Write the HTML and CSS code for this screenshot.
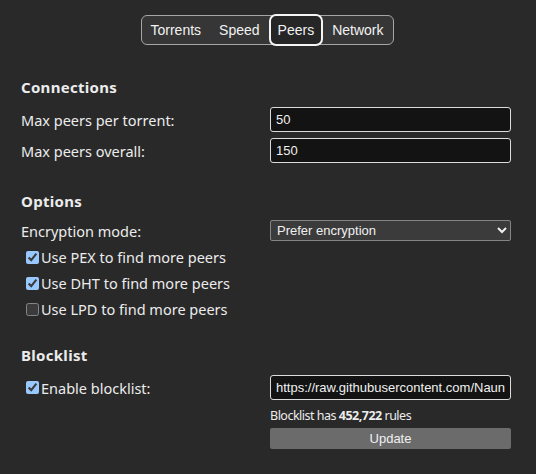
FILE: index.html
```html
<!DOCTYPE html>
<html>
<head>
<meta charset="utf-8">
<link rel="stylesheet" href="styles.css">
</head>
<body>
<div class="tabbar">
  <div class="tabs">
    <button class="tab">Torrents</button>
    <button class="tab">Speed</button>
    <button class="tab active">Peers</button>
    <button class="tab">Network</button>
  </div>
</div>
<div class="page">
  <section class="group">
    <h3 class="heading">Connections</h3>
    <div class="row">
      <label class="label">Max peers per torrent:</label>
      <input class="field" type="text" value="50">
    </div>
    <div class="row">
      <label class="label">Max peers overall:</label>
      <input class="field" type="text" value="150">
    </div>
  </section>
  <section class="group">
    <h3 class="heading">Options</h3>
    <div class="row row-select">
      <label class="label">Encryption mode:</label>
      <select class="select">
        <option>Prefer encryption</option>
      </select>
    </div>
    <label class="check"><input type="checkbox" checked><span>Use PEX to find more peers</span></label>
    <label class="check"><input type="checkbox" checked><span>Use DHT to find more peers</span></label>
    <label class="check"><input type="checkbox"><span>Use LPD to find more peers</span></label>
  </section>
  <section class="group">
    <h3 class="heading">Blocklist</h3>
    <div class="row">
      <label class="check inline"><input type="checkbox" checked><span>Enable blocklist:</span></label>
      <input class="field" type="text" value="https://raw.githubusercontent.com/Naunter/BT_BlockLists/master/bt_blocklists.gz">
    </div>
    <div class="row row-info">
      <span></span>
      <div class="info">Blocklist has <b>452,722</b> rules</div>
    </div>
    <div class="row row-btn">
      <span></span>
      <button class="update">Update</button>
    </div>
  </section>
</div>
</body>
</html>
```

FILE: styles.css
```css
html { color-scheme: dark; }
body {
  margin: 0;
  background: #292929;
  color: #ececec;
  font-family: "Noto Sans", "Open Sans", sans-serif;
  font-size: 14.5px;
}
.tabbar {
  display: flex;
  justify-content: center;
  padding-top: 15px;
}
.tabs {
  display: flex;
  background: #363636;
  border: 1px solid #a6a6a6;
  border-radius: 6px;
  height: 28px;
  margin-left: -2px;
}
.tab {
  font-family: "Liberation Sans", Arial, sans-serif;
  font-size: 14px;
  color: #f2f2f2;
  background: transparent;
  border: none;
  padding: 0 9px;
  height: 28px;
  cursor: pointer;
}
.tab.active {
  border: 2px solid #f4f4f4;
  border-radius: 7px;
  background: #262626;
  height: 32px;
  margin-top: -2px;
  padding: 0 7px;
}
.page {
  padding: 0 25px 0 21px;
}
.group { margin: 0; }
.heading {
  margin: 0;
  font-size: 15px;
  line-height: 20px;
  font-weight: 700;
  letter-spacing: 0.3px;
}
.group:nth-child(1) .heading { padding-top: 32px; padding-bottom: 10px; }
.group:nth-child(2) .heading { padding-top: 22px; padding-bottom: 9px; }
.group:nth-child(3) .heading { padding-top: 23px; padding-bottom: 10px; }
.row {
  display: grid;
  grid-template-columns: 249px 1fr;
  align-items: center;
  margin-bottom: 6px;
}
.label { white-space: nowrap; }
.field {
  box-sizing: border-box;
  height: 25px;
  width: 100%;
  background: #131313;
  color: #f0f0f0;
  border: 1px solid #dcdcdc;
  border-radius: 3px;
  padding: 0 5px;
  font-family: "Liberation Sans", Arial, sans-serif;
  font-size: 13px;
  outline: none;
}
.row-select { margin-bottom: 3px; }
.select {
  box-sizing: border-box;
  height: 21px;
  width: 100%;
  background: #3b3b3b;
  color: #f0f0f0;
  border: 1px solid #858585;
  border-radius: 2px;
  font-family: "Liberation Sans", Arial, sans-serif;
  font-size: 13px;
  padding: 0 2px;
}
.check {
  display: flex;
  align-items: center;
  height: 26px;
  padding-left: 4px;
  white-space: nowrap;
}
.check input {
  margin: 0 2px 0 1px;
  width: 13px;
  height: 13px;
}
.check.inline { height: 25px; }
.row-info { margin-bottom: 0; }
.info {
  font-size: 12.5px;
  letter-spacing: -0.5px;
  height: 20px;
  line-height: 20px;
}
.info b { font-weight: 700; }
.update {
  box-sizing: border-box;
  height: 21px;
  width: 100%;
  margin-top: 2px;
  background: #6b6b6b;
  color: #f0f0f0;
  border: none;
  border-radius: 2px;
  font-family: "Liberation Sans", Arial, sans-serif;
  font-size: 13px;
}
```
